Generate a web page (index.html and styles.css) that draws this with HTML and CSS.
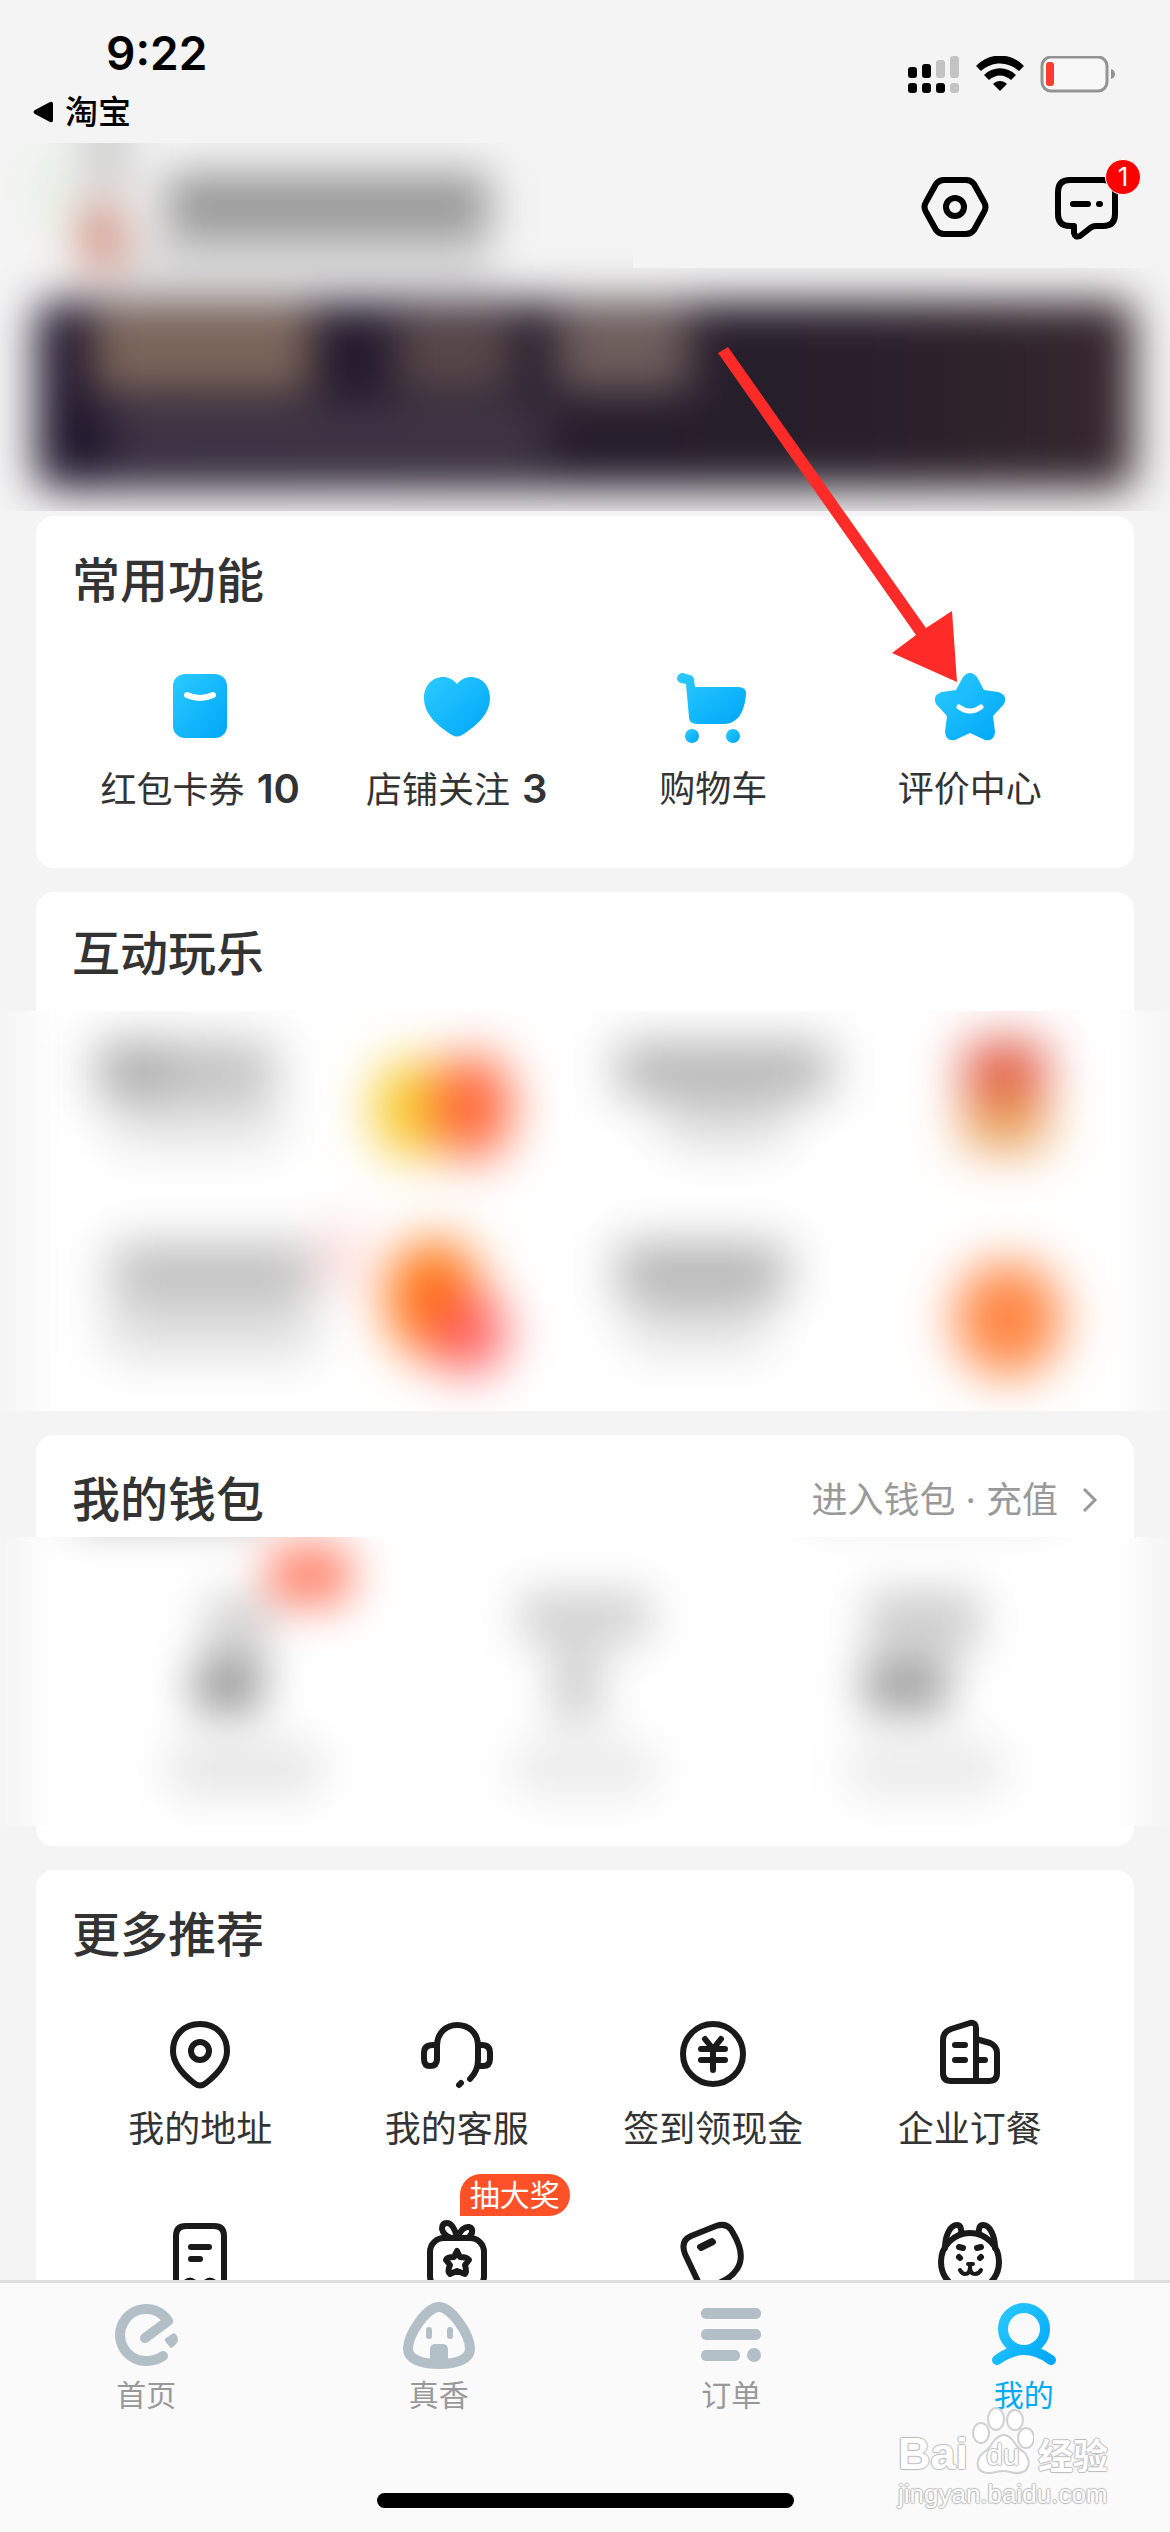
FILE: index.html
```html
<!DOCTYPE html>
<html lang="zh-CN">
<head>
<meta charset="utf-8">
<meta name="viewport" content="width=device-width, initial-scale=1">
<title>我的</title>
<link rel="stylesheet" href="styles.css">
</head>
<body>
<svg class="defs" aria-hidden="true">
  <defs>
    <linearGradient id="blue" x1="0" y1="0" x2="1" y2="1">
      <stop offset="0" stop-color="#2bcbff"/><stop offset="1" stop-color="#00a6f8"/>
    </linearGradient>
    <linearGradient id="blueLine" gradientUnits="userSpaceOnUse" x1="6" y1="10" x2="66" y2="60">
      <stop offset="0" stop-color="#2bcbff"/><stop offset="1" stop-color="#00a6f8"/>
    </linearGradient>
    <linearGradient id="night" x1="0" y1="0" x2="1" y2="0">
      <stop offset="0" stop-color="#21172e"/><stop offset="0.75" stop-color="#281f2b"/><stop offset="1" stop-color="#36272c"/>
    </linearGradient>
    <filter id="haze" filterUnits="userSpaceOnUse" x="-100" y="-100" width="1370" height="700" color-interpolation-filters="sRGB">
      <feGaussianBlur stdDeviation="25"/>
    </filter>
    <filter id="mist" filterUnits="userSpaceOnUse" x="-100" y="-100" width="1370" height="700" color-interpolation-filters="sRGB">
      <feGaussianBlur stdDeviation="22"/>
    </filter>
    <symbol id="profile" overflow="visible">
      <g filter="url(#mist)">
        <rect x="-80" y="-80" width="1330" height="560" fill="#f4f4f4"/>
        <rect x="84" y="-40" width="46" height="90" fill="#cdcdcd"/>
        <ellipse cx="50" cy="44" rx="14" ry="46" fill="#e3efdf"/>
        <rect x="80" y="62" width="44" height="66" fill="#cf9484"/>
        <rect x="166" y="30" width="324" height="66" fill="#989898"/>
        <rect x="130" y="104" width="360" height="30" fill="#d0d0d0"/>
        <rect x="36" y="158" width="1098" height="188" rx="16" fill="url(#night)"/>
        <rect x="92" y="164" width="220" height="86" fill="#7c665a"/>
        <rect x="396" y="172" width="118" height="76" fill="#58484a"/>
        <rect x="556" y="164" width="134" height="84" fill="#6e5e5c"/>
        <rect x="110" y="262" width="440" height="60" fill="#403646"/>
      </g>
    </symbol>
  </defs>
</svg>

<div class="screen">
  <header class="status">
    <div class="status-left">
      <time class="clock">9:22</time>
      <a class="back" href="#">
        <svg width="20" height="22" viewBox="0 0 20 22" aria-hidden="true"><path d="M2 9 L17 1 Q20 0 20 3 V19 Q20 22 17 21 L2 13 Q-1 11 2 9Z"/></svg>
        <span>淘宝</span>
      </a>
    </div>
    <div class="status-right">
      <svg width="52" height="38" viewBox="0 0 52 38" aria-label="信号">
        <rect x="0" y="11" width="9" height="11" rx="3"/><rect x="14" y="8" width="9" height="14" rx="3"/>
        <rect x="28" y="4" width="9" height="18" rx="3" fill="#c3c3c3"/><rect x="42" y="0" width="9" height="22" rx="3" fill="#c3c3c3"/>
        <rect x="0" y="27" width="9" height="10" rx="3"/><rect x="14" y="27" width="9" height="10" rx="3"/><rect x="28" y="27" width="9" height="10" rx="3"/>
        <rect x="42" y="27" width="9" height="10" rx="3" fill="#c3c3c3"/>
      </svg>
      <svg width="48" height="38" viewBox="0 0 48 38" aria-label="无线网络">
        <path d="M0 10 C13 -4 35 -4 48 10 L43 15 C32 5 16 5 5 15Z"/>
        <path d="M8 19 C17 10 31 10 40 19 L35 24 C28 18 20 18 13 24Z"/>
        <path d="M17 28 C21 24 27 24 31 28 L24 35Z"/>
      </svg>
      <svg width="76" height="38" viewBox="0 0 76 38" aria-label="电池">
        <rect x="2" y="1" width="65" height="34" rx="9" fill="#f8f8f8" stroke="#939393" stroke-width="3"/>
        <rect x="6" y="6" width="8" height="24" rx="3" fill="#ff3b30"/>
        <path d="M71 13 Q75 14 75 18 Q75 22 71 23Z" fill="#939393"/>
      </svg>
    </div>
  </header>

  <main class="content">
    <div class="profile">
      <svg class="profile-name" viewBox="0 0 633 125" preserveAspectRatio="none" aria-hidden="true"><use href="#profile"/></svg>
      <div class="profile-actions">
        <button class="icon-button" aria-label="设置">
          <svg class="line" width="72" height="72" viewBox="0 0 72 72"><path d="M25 9 H47 Q52 9 55 13 L65 31 Q68 36 65 41 L55 59 Q52 63 47 63 H25 Q20 63 17 59 L7 41 Q4 36 7 31 L17 13 Q20 9 25 9Z"/><circle cx="36" cy="36" r="9"/></svg>
        </button>
        <button class="icon-button" aria-label="消息">
          <svg class="line" width="72" height="72" viewBox="0 0 72 72"><path d="M19 9 H52 Q64 9 64 21 V43 Q64 55 52 55 H45 Q41 55 38 58 L29 65 Q24 67 23 62 V55 H19 Q7 55 7 43 V21 Q7 9 19 9Z"/><path d="M22 33 H37 M48 33 H49"/></svg>
          <span class="count">1</span>
        </button>
      </div>
    </div>
    <svg class="banner" viewBox="0 125 1170 243" preserveAspectRatio="none" aria-hidden="true"><use href="#profile"/></svg>

    <div class="cards">
      <section class="card">
        <h2>常用功能</h2>
        <nav class="grid grid-common">
          <a class="item" href="#">
            <svg width="84" height="84" viewBox="0 0 84 84"><rect x="15" y="10" width="54" height="64" rx="12" fill="url(#blue)"/><path d="M29 31 Q42 37 55 31" fill="none" stroke="#fff" stroke-width="6" stroke-linecap="round"/></svg>
            <span>红包卡券 <b>10</b></span>
          </a>
          <a class="item" href="#">
            <svg width="84" height="84" viewBox="0 0 84 84"><path fill="url(#blue)" d="M42 20 C37 14 32 13 28 13 C17 13 9 22 9 34 C9 52 26 64 37 71 Q42 74 47 71 C58 64 75 52 75 34 C75 22 67 13 56 13 C52 13 47 14 42 20Z"/></svg>
            <span>店铺关注 <b>3</b></span>
          </a>
          <a class="item" href="#">
            <svg width="84" height="84" viewBox="0 0 84 84"><g fill="url(#blue)"><path d="M12 9 L19 11 Q23 12 23 16 L24 23 H67 Q76 23 75 31 C73 50 66 60 52 60 H26 Q18 60 18 53 L15 20 L10 19 Q6 18 6 14 Q7 9 12 9Z"/><circle cx="21" cy="72" r="7"/><circle cx="62" cy="72" r="7"/></g></svg>
            <span>购物车</span>
          </a>
          <a class="item" href="#">
            <svg width="84" height="84" viewBox="0 0 84 84"><path fill="url(#blue)" d="M35 13 Q42 5 49 13 L56 26 L70 28 Q80 31 76 40 L65 52 L67 68 Q66 78 57 76 L42 69 L27 76 Q18 78 17 68 L19 52 L8 40 Q4 31 14 28 L28 26Z"/><path d="M31 43 Q42 51 53 43" fill="none" stroke="#fff" stroke-width="5" stroke-linecap="round"/></svg>
            <span>评价中心</span>
          </a>
        </nav>
      </section>

      <section class="card card-games">
        <h2>互动玩乐</h2>
        <svg class="veil veil-games" viewBox="0 0 1170 400" preserveAspectRatio="none" aria-hidden="true">
          <rect width="1170" height="400" fill="#f4f4f4"/>
          <g filter="url(#haze)">
            <rect x="26" y="-60" width="1118" height="520" fill="#fff"/>
            <rect x="98" y="32" width="72" height="54" fill="#a4a4a4"/><rect x="170" y="32" width="104" height="54" fill="#bbb"/><rect x="112" y="92" width="168" height="42" fill="#e0e0e0"/>
            <ellipse cx="412" cy="98" rx="40" ry="50" fill="#f7cb2a"/><ellipse cx="472" cy="96" rx="40" ry="54" fill="#ff6438"/>
            <rect x="618" y="34" width="212" height="50" fill="#adadad"/><rect x="665" y="90" width="120" height="42" fill="#d6d6d6"/>
            <rect x="964" y="30" width="82" height="58" rx="16" fill="#e05440"/><rect x="962" y="84" width="86" height="56" rx="16" fill="#eaa058"/>
            <rect x="112" y="234" width="200" height="54" fill="#bababa"/><rect x="108" y="294" width="206" height="50" fill="#dcdcdc"/>
            <ellipse cx="340" cy="244" rx="22" ry="34" fill="#ffd8d8"/>
            <ellipse cx="434" cy="288" rx="48" ry="60" fill="#ff7410"/><ellipse cx="468" cy="322" rx="38" ry="40" fill="#ff5858"/>
            <rect x="618" y="234" width="168" height="54" fill="#aeaeae"/><rect x="630" y="292" width="136" height="46" fill="#dedede"/>
            <ellipse cx="1008" cy="308" rx="54" ry="58" fill="#ff8642"/>
          </g>
        </svg>
      </section>

      <section class="card card-wallet">
        <div class="card-head">
          <h2>我的钱包</h2>
          <a class="more" href="#">进入钱包 · 充值
            <svg width="16" height="26" viewBox="0 0 16 26" aria-hidden="true"><path d="M2 2 L13 13 L2 24" fill="none" stroke="#999" stroke-width="3"/></svg>
          </a>
        </div>
        <svg class="veil veil-wallet" viewBox="0 0 1170 289" preserveAspectRatio="none" aria-hidden="true">
          <rect width="1170" height="289" fill="#f4f4f4"/>
          <g filter="url(#mist)">
            <rect x="26" y="-60" width="1118" height="420" fill="#fff"/>
            <rect x="74" y="-54" width="190" height="40" fill="#a8a8a8"/><rect x="810" y="-54" width="245" height="34" fill="#d4d4d4"/>
            <rect x="205" y="58" width="66" height="66" fill="#d4d4d4"/>
            <rect x="268" y="6" width="84" height="64" rx="20" fill="#ff8a74"/>
            <rect x="194" y="124" width="68" height="52" fill="#999"/><rect x="170" y="206" width="150" height="52" fill="#e6e6e6"/>
            <rect x="520" y="54" width="130" height="52" fill="#d2d2d2"/><rect x="552" y="110" width="50" height="76" fill="#d0d0d0"/><rect x="515" y="206" width="140" height="52" fill="#ebebeb"/>
            <rect x="868" y="54" width="112" height="60" fill="#cecece"/><rect x="864" y="122" width="84" height="54" fill="#a0a0a0"/><rect x="850" y="206" width="152" height="52" fill="#eaeaea"/>
          </g>
        </svg>
      </section>

      <section class="card">
        <h2>更多推荐</h2>
        <nav class="grid grid-more">
          <a class="item" href="#">
            <svg class="line" width="84" height="84" viewBox="0 0 84 84"><path d="M42 12 C25 12 15 24 15 39 C15 53 27 64 36 71 Q42 76 48 71 C57 64 69 53 69 39 C69 24 59 12 42 12Z"/><circle cx="42" cy="39" r="9"/></svg>
            <span>我的地址</span>
          </a>
          <a class="item" href="#">
            <svg class="line" width="84" height="84" viewBox="0 0 84 84"><path d="M22 48 V34 C22 21 31 13 42 13 C54 13 63 21 63 34 V48 C63 57 60 62 55 67 M22 33 H18 Q9 33 9 41 V47 Q9 54 15 54 Q22 54 22 47 M63 33 H67 Q75 33 75 41 V47 Q75 54 68 54 H63 M44 73 L46 71"/></svg>
            <span>我的客服</span>
          </a>
          <a class="item" href="#">
            <svg class="line" width="84" height="84" viewBox="0 0 84 84"><circle cx="42" cy="42" r="30"/><path d="M34 27 L42 37 L50 27 M30 37 H54 M30 48 H54 M42 37 V58"/></svg>
            <span>签到领现金</span>
          </a>
          <a class="item" href="#">
            <svg class="line" width="84" height="84" viewBox="0 0 84 84"><path d="M48 69 V16 Q48 10 42 11 L23 17 Q15 20 15 28 V61 Q15 69 23 69 H61 Q69 69 69 61 V41 Q69 34 62 31 L48 27 M27 33 H37 M27 48 H37 M51 48 H57"/></svg>
            <span>企业订餐</span>
          </a>
          <a class="item" href="#" aria-label="发票">
            <svg class="line" width="84" height="84" viewBox="0 0 84 84"><path d="M18 78 V20 Q18 10 28 10 H56 Q66 10 66 20 V78 M33 31 H51 M33 43 H42 M25 70 Q32 59 39 70 M45 70 Q52 59 59 70"/></svg>
          </a>
          <a class="item" href="#">
            <svg class="line" width="84" height="84" viewBox="0 0 84 84"><rect x="15" y="22" width="54" height="52" rx="14"/><path d="M42 21 Q38 7 32 7 Q27 7 27 13 Q28 18 34 21 M43 20 Q48 10 54 11 Q58 12 57 17 L54 21 M42 35 L45 41 Q52 41 54 44 L50 49 Q52 56 50 58 L42 55 L35 58 Q32 56 35 49 L31 44 Q32 41 39 41Z"/></svg>
            <span class="tag">抽大奖</span>
          </a>
          <a class="item" href="#" aria-label="卡包">
            <svg class="line" width="84" height="84" viewBox="0 0 84 84"><path d="M14 38 Q9 25 20 20 L45 10 Q57 6 62 17 C71 32 72 44 66 53 Q61 61 50 66 L32 76Z M29 31 L41 25 L42 26 L30 32"/></svg>
          </a>
          <a class="item" href="#" aria-label="宠物">
            <svg class="line" width="84" height="84" viewBox="0 0 84 84"><circle cx="42" cy="46" r="29"/><path d="M17 32 C17 20 22 9 29 9 Q34 9 33 18 M67 32 C67 20 62 9 55 9 Q50 9 51 18 M31 31 L35 32 M53 31 L49 32 M31 41 L32 42 M53 41 L52 42"/><path class="fine" d="M40 48 H45 M32 54 Q34 58 37 58 Q42 58 42 50 Q42 58 47 58 Q51 58 53 54"/></svg>
          </a>
        </nav>
      </section>
    </div>
  </main>

  <footer class="tabbar">
    <nav class="tabs">
      <a class="tab" href="#">
        <svg width="72" height="72" viewBox="0 0 72 72"><path d="M53 57 Q46 62 36 62 A26 26 0 1 1 58 22 L35 39" fill="none" stroke="#b2bfc6" stroke-width="10" stroke-linecap="round" stroke-linejoin="round"/><path fill="#b2bfc6" d="M56 39 L62 35 Q65 33 67 37 Q69 41 67 44 L63 48 Q60 50 59 47 L55 42 Q54 40 56 39Z"/></svg>
        <span>首页</span>
      </a>
      <a class="tab" href="#">
        <svg width="72" height="72" viewBox="0 0 72 72"><path d="M36 8 C24 8 5 35 5 50 C5 60 18 65 36 65 C54 65 67 60 67 50 C67 35 48 8 36 8Z" fill="none" stroke="#b2bfc6" stroke-width="10"/><path d="M26 31 V37 M47 31 V37" stroke="#b2bfc6" stroke-width="6" stroke-linecap="round"/><rect x="27" y="45" width="18" height="20" rx="5" fill="#b2bfc6"/></svg>
        <span>真香</span>
      </a>
      <a class="tab" href="#">
        <svg width="72" height="72" viewBox="0 0 72 72" fill="#b2bfc6"><rect x="6" y="9" width="60" height="11" rx="5"/><rect x="6" y="30" width="60" height="11" rx="5"/><rect x="6" y="51" width="39" height="11" rx="5"/><circle cx="59" cy="56" r="7"/></svg>
        <span>订单</span>
      </a>
      <a class="tab tab-active" href="#">
        <svg width="72" height="72" viewBox="0 0 72 72" fill="none" stroke="url(#blueLine)" stroke-width="10" stroke-linecap="round"><circle cx="36" cy="30" r="21"/><path d="M9 61 Q36 41 63 61"/></svg>
        <span>我的</span>
      </a>
    </nav>
    <div class="home-bar"></div>
    <div class="watermark">
      <div class="brand">
        <span class="brand-latin">Bai</span>
        <span class="paw">
          <svg width="62" height="68" viewBox="0 0 62 68" aria-hidden="true"><g fill="#fff" stroke="#d0d0d0" stroke-width="2"><ellipse cx="9" cy="26" rx="8" ry="10"/><ellipse cx="24" cy="12" rx="8" ry="11"/><ellipse cx="43" cy="13" rx="8" ry="10"/><ellipse cx="54" cy="31" rx="8" ry="10"/><path d="M21 35 Q32 21 42 35 Q46 42 53 46 Q60 56 54 63 Q48 68 38 65 Q31 63 24 65 Q12 68 7 62 Q3 53 11 46 Q17 42 21 35Z"/></g></svg>
          <span class="du">du</span>
        </span>
        <span class="brand-han">经验</span>
      </div>
      <div class="site">jingyan.baidu.com</div>
    </div>
  </footer>

  <svg class="pointer" width="240" height="336" viewBox="0 0 240 336" aria-hidden="true"><path fill="#ff2b28" d="M0 6 L10 0 L208 281 L234 264 L239 335 L174 306 L198 288Z"/></svg>
</div>
</body>
</html>
```
FILE: styles.css
```css
* { box-sizing: border-box; }

body {
  margin: 0;
  background: #f4f4f4;
  color: #333;
  font-family: Inter, "Noto Sans CJK SC", sans-serif;
}

a { color: inherit; text-decoration: none; }
h2 { margin: 0; font-size: 48px; line-height: 56px; font-weight: 500; }
svg { display: block; flex: none; }

.defs { position: absolute; width: 0; height: 0; }

.line {
  fill: none;
  stroke: #1a1a1a;
  stroke-width: 6px;
  stroke-linecap: round;
  stroke-linejoin: round;
}
.line .fine { stroke-width: 4px; }

.screen {
  position: relative;
  display: flex;
  flex-direction: column;
  height: 100vh;
  overflow: hidden;
}

/* Status bar */
.status {
  display: flex;
  justify-content: space-between;
  flex: none;
  height: 143px;
  padding: 24px 54px 0 33px;
  color: #000;
}
.clock {
  display: block;
  padding-left: 73px;
  font-size: 46px;
  line-height: 58px;
  font-weight: 600;
}
.back {
  display: flex;
  align-items: center;
  gap: 12px;
  padding-top: 8px;
  font-size: 33px;
  line-height: 44px;
  font-weight: 500;
}
.status-right { display: flex; gap: 16px; padding-top: 32px; }

/* Profile */
.content { flex: 1; min-height: 0; overflow: hidden; }
.profile { display: flex; justify-content: space-between; }
.profile-name { width: 54.1%; height: 125px; overflow: hidden; }
.profile-actions { display: flex; align-items: center; gap: 60px; padding: 2px 47px 0 0; }
.icon-button {
  position: relative;
  padding: 0;
  border: 0;
  background: none;
}
.icon-button .line { stroke: #000; }
.count {
  position: absolute;
  top: -12px;
  right: -18px;
  width: 36px;
  height: 36px;
  border: 1px solid #fff;
  border-radius: 50%;
  background: #f00;
  color: #fff;
  font: 26px/34px Inter, sans-serif;
  text-align: center;
}
.banner { width: 100%; height: 243px; overflow: hidden; }

/* Cards */
.cards { display: flex; flex-direction: column; gap: 24px; padding: 5px 36px 0; }
.card { padding: 37px 36px 0; border-radius: 18px; background: #fff; }
.card-games { padding-top: 34px; }
.card-wallet { padding-bottom: 20px; }
.card-head { display: flex; justify-content: space-between; align-items: center; }
.more {
  display: flex;
  align-items: center;
  gap: 24px;
  color: #999;
  font-size: 36px;
  line-height: 56px;
}
.veil {
  width: calc(100% + 144px);
  margin-left: -72px;
  overflow: hidden;
}
.veil-games { height: 400px; margin-top: 29px; }
.veil-wallet { height: 289px; margin-top: 9px; }

.grid { display: grid; grid-template-columns: repeat(4, 1fr); }
.grid-common { padding: 55px 0 57px; }
.grid-common .item { gap: 20px; }
.grid-more { row-gap: 66px; padding: 49px 0 57px; }
.item {
  position: relative;
  display: flex;
  flex-direction: column;
  align-items: center;
  gap: 12px;
  font-size: 36px;
  line-height: 42px;
  white-space: nowrap;
}
.item b { margin-left: 2px; font-size: 40px; line-height: 42px; font-weight: 600; }
.tag {
  position: absolute;
  top: -43px;
  left: 50%;
  height: 44px;
  margin-left: 2px;
  padding: 0 10px;
  border: 1px solid #fff;
  border-radius: 22px 22px 22px 0;
  background: #ff5128;
  color: #fff;
  font-size: 30px;
  line-height: 42px;
}

/* Tab bar */
.tabbar {
  position: relative;
  flex: none;
  padding: 16px 0 24px;
  border-top: 3px solid #dfdfdf;
  background: #fafafa;
}
.tabs { display: grid; grid-template-columns: repeat(4, 1fr); }
.tab {
  display: flex;
  flex-direction: column;
  align-items: center;
  gap: 6px;
  color: #999;
  font-size: 30px;
  line-height: 36px;
}
.tab-active { color: #00aaf5; }
.home-bar {
  width: 417px;
  height: 15px;
  margin: 80px auto 0;
  border-radius: 8px;
  background: #000;
}

/* Watermark */
.watermark {
  position: absolute;
  right: 62px;
  bottom: 23px;
  color: #fff;
  text-shadow: 1px 0 1px #bbb, -1px 0 1px #bbb, 0 1px 1px #bbb, 0 -1px 1px #bbb;
}
.brand { display: flex; align-items: flex-end; gap: 4px; }
.brand-latin { font: bold 45px/50px "Liberation Sans", sans-serif; }
.brand-han { font-size: 35px; line-height: 46px; font-weight: 700; }
.paw { position: relative; padding-bottom: 4px; }
.du {
  position: absolute;
  left: 0;
  right: 0;
  bottom: 7px;
  font: 30px/34px "Liberation Sans", sans-serif;
  text-align: center;
}
.site { font: 26px/30px "Liberation Sans", sans-serif; }

/* Callout arrow */
.pointer { position: absolute; top: 347px; left: 61.4%; }
```
